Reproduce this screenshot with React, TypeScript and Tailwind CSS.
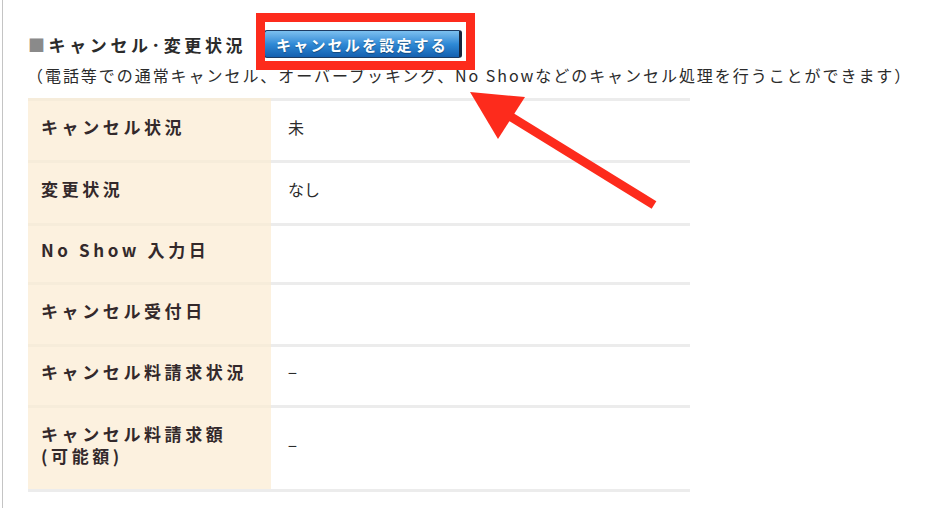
const rows = [
  { label: "キャンセル状況", value: "未", h: "h-[62px]" },
  { label: "変更状況", value: "なし", h: "h-[63px]" },
  { label: "No Show 入力日", value: "", h: "h-[59px]" },
  { label: "キャンセル受付日", value: "", h: "h-[62px]" },
  { label: "キャンセル料請求状況", value: "−", h: "h-[61px]" },
  { label: "キャンセル料請求額\n(可能額)", value: "−", h: "h-[84px]" },
];

export default function App() {
  return (
    <div
      className="relative w-[936px] h-[508px] bg-white overflow-hidden text-[#2b2b2b]"
      style={{ fontFamily: '"Noto Sans CJK JP", "Noto Sans", sans-serif' }}
    >
      <div className="ml-[2px] h-full border-l border-[#c4c4c4] pl-[25px] pt-[30px]">
        {/* heading + button */}
        <div className="flex items-center h-[28px]">
          <h2 className="w-[236px] shrink-0 text-[17px] font-bold tracking-[3.6px] leading-none whitespace-nowrap">
            <span className="text-[#8a8a8a]">■</span>キャンセル･変更状況
          </h2>
          <button className="w-[198px] h-[28px] rounded-[3px] border border-[#1d3b63] border-r-[3px] border-r-[#16263d] bg-gradient-to-b from-[#7cc0ef] via-[#2f8ad6] to-[#1560b0] text-white text-[15px] font-bold tracking-[2.2px] leading-none [text-shadow:0_1px_1px_rgba(0,0,0,0.35)]">
            キャンセルを設定する
          </button>
        </div>

        <p className="mt-[8px] text-[16px] tracking-[1.95px] leading-[18px] whitespace-nowrap -ml-[1px]">
          （電話等での通常キャンセル、オーバーブッキング、No Showなどのキャンセル処理を行うことができます）
        </p>

        {/* table */}
        <div className="mt-[14px] w-[662px] border-b-[3px] border-[#ececec]">
          {rows.map((r, i) => (
            <div key={i} className={`flex ${r.h}`}>
              <div className="w-[243px] shrink-0 bg-[#fcf1df] border-t-[3px] border-[#f6ecda] flex items-center pl-[13px] pb-[8px]">
                <div className="text-[17px] font-bold tracking-[3.6px] leading-[22px] text-[#33292b] whitespace-pre-line">
                  {r.label}
                </div>
              </div>
              <div className="flex-1 border-t-[3px] border-[#ececec] flex items-center pl-[17px] pb-[8px] text-[16px]">
                {r.value}
              </div>
            </div>
          ))}
        </div>
      </div>

      {/* annotation: red box */}
      <div className="absolute left-[256px] top-[13px] w-[219px] h-[57px] border-[9px] border-[#fd2b1c]" />

      {/* annotation: arrow */}
      <svg className="absolute left-0 top-0 pointer-events-none" width="936" height="508" viewBox="0 0 936 508">
        <line x1="508" y1="115" x2="654" y2="205" stroke="#fd2b1c" strokeWidth="9" />
        <polygon points="470,92 525,97 498,139" fill="#fd2b1c" />
      </svg>
    </div>
  );
}
